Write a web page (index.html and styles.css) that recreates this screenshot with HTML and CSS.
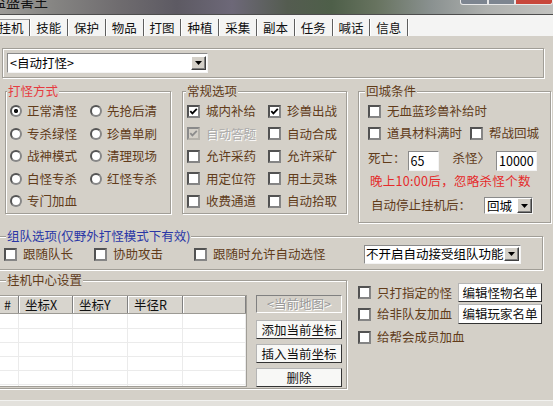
FILE: index.html
```html
<!DOCTYPE html>
<html lang="zh-CN">
<head>
<meta charset="utf-8">
<title>挂机设置</title>
<link rel="stylesheet" href="styles.css">
</head>
<body>
<div class="titlebar">
  <span class="title-text">监盛害王</span>
  <div class="winbtns"><span class="wb wb-min"></span><span class="wb wb-max"></span><span class="wb wb-close"></span></div>
</div>
<div class="tabs">
  <span class="tab tab-first active">挂机</span>
  <span class="tab">技能</span>
  <span class="tab">保护</span>
  <span class="tab">物品</span>
  <span class="tab">打图</span>
  <span class="tab">种植</span>
  <span class="tab">采集</span>
  <span class="tab">副本</span>
  <span class="tab">任务</span>
  <span class="tab">喊话</span>
  <span class="tab">信息</span>
</div>
<div class="panel">
  <div class="topframe">
    <div class="select sel-mode"><span class="sel-text">&lt;自动打怪&gt;</span><span class="drop"><svg width="7" height="4" viewBox="0 0 7 4"><polygon points="0,0 7,0 3.5,4" fill="#000"/></svg></span></div>
  </div>

  <div class="groups">
    <div class="group g1">
      <div class="legend red">打怪方式</div>
      <div class="opts opts-g1">
        <label class="opt"><span class="radio on"></span>正常清怪</label>
        <label class="opt"><span class="radio"></span>先抢后清</label>
        <label class="opt"><span class="radio"></span>专杀绿怪</label>
        <label class="opt"><span class="radio"></span>珍兽单刷</label>
        <label class="opt"><span class="radio"></span>战神模式</label>
        <label class="opt"><span class="radio"></span>清理现场</label>
        <label class="opt"><span class="radio"></span>白怪专杀</label>
        <label class="opt"><span class="radio"></span>红怪专杀</label>
        <label class="opt"><span class="radio"></span>专门加血</label>
      </div>
    </div>

    <div class="group g2">
      <div class="legend">常规选项</div>
      <div class="opts opts-g2">
        <label class="opt"><span class="cb on"><svg width="9" height="9" viewBox="0 0 9 9"><path d="M1.3 4.2 L3.4 6.4 L7.8 1.9" fill="none" stroke="#000" stroke-width="1.8"/></svg></span>城内补给</label>
        <label class="opt"><span class="cb on"><svg width="9" height="9" viewBox="0 0 9 9"><path d="M1.3 4.2 L3.4 6.4 L7.8 1.9" fill="none" stroke="#000" stroke-width="1.8"/></svg></span>珍兽出战</label>
        <label class="opt disabled"><span class="cb on dis"><svg width="9" height="9" viewBox="0 0 9 9"><path d="M1.3 4.2 L3.4 6.4 L7.8 1.9" fill="none" stroke="#8c8c8c" stroke-width="1.8"/></svg></span>自动答题</label>
        <label class="opt"><span class="cb"></span>自动合成</label>
        <label class="opt"><span class="cb"></span>允许采药</label>
        <label class="opt"><span class="cb"></span>允许采矿</label>
        <label class="opt"><span class="cb"></span>用定位符</label>
        <label class="opt"><span class="cb"></span>用土灵珠</label>
        <label class="opt"><span class="cb"></span>收费通道</label>
        <label class="opt"><span class="cb"></span>自动拾取</label>
      </div>
    </div>

    <div class="group g3">
      <div class="legend">回城条件</div>
      <div class="g3-body">
        <div class="g3-row r1"><label class="opt"><span class="cb"></span>无血蓝珍兽补给时</label></div>
        <div class="g3-row r2">
          <label class="opt w102"><span class="cb"></span>道具材料满时</label>
          <label class="opt"><span class="cb"></span>帮战回城</label>
        </div>
        <div class="g3-row r3">
          <span class="lbl">死亡：</span>
          <span class="input in-death">65</span>
          <span class="lbl lbl-kill">杀怪〉</span>
          <span class="input in-kill">10000</span>
        </div>
        <div class="g3-row r4"><span class="warn">晚上10:00后，忽略杀怪个数</span></div>
        <div class="g3-row r5">
          <span class="lbl">自动停止挂机后：</span>
          <div class="select sel-back"><span class="sel-text">回城</span><span class="drop"><svg width="7" height="4" viewBox="0 0 7 4"><polygon points="0,0 7,0 3.5,4" fill="#000"/></svg></span></div>
        </div>
      </div>
    </div>
  </div>

  <div class="group team">
    <div class="legend blue">组队选项(仅野外打怪模式下有效)</div>
    <div class="team-row">
      <label class="opt t1"><span class="cb"></span>跟随队长</label>
      <label class="opt t2"><span class="cb"></span>协助攻击</label>
      <label class="opt t3"><span class="cb"></span>跟随时允许自动选怪</label>
      <div class="select sel-team"><span class="sel-text">不开启自动接受组队功能</span><span class="drop"><svg width="7" height="4" viewBox="0 0 7 4"><polygon points="0,0 7,0 3.5,4" fill="#000"/></svg></span></div>
    </div>
  </div>

  <div class="bottom">
    <div class="group center">
      <div class="legend">挂机中心设置</div>
      <div class="center-body">
        <div class="table">
          <div class="trow thead">
            <span class="th">#</span><span class="th">坐标X</span><span class="th">坐标Y</span><span class="th">半径R</span><span class="th"></span>
          </div>
          <div class="trow tr first"><span></span><span></span><span></span><span></span><span></span></div>
          <div class="trow tr"><span></span><span></span><span></span><span></span><span></span></div>
          <div class="trow tr"><span></span><span></span><span></span><span></span><span></span></div>
          <div class="trow tr"><span></span><span></span><span></span><span></span><span></span></div>
          <div class="trow tr"><span></span><span></span><span></span><span></span><span></span></div>
          <div class="trow tr"><span></span><span></span><span></span><span></span><span></span></div>
        </div>
        <div class="btncol">
          <span class="btn btn-map">&lt;当前地图&gt;</span>
          <span class="btn btn-add">添加当前坐标</span>
          <span class="btn btn-ins">插入当前坐标</span>
          <span class="btn btn-del">删除</span>
        </div>
      </div>
    </div>

    <div class="rightopts">
      <div class="rrow rr1"><label class="opt w100"><span class="cb"></span>只打指定的怪</label><span class="btn btn-edit">编辑怪物名单</span></div>
      <div class="rrow rr2"><label class="opt w100"><span class="cb"></span>给非队友加血</label><span class="btn btn-edit">编辑玩家名单</span></div>
      <div class="rrow rr3"><label class="opt"><span class="cb"></span>给帮会成员加血</label></div>
    </div>
  </div>

  <div class="statusbar"></div>
</div>
</body>
</html>
```
FILE: styles.css
```css
* { box-sizing: border-box; }
html, body { margin: 0; padding: 0; }
body {
  width: 553px;
  height: 406px;
  overflow: hidden;
  background: #d4d0c8;
  font-family: "Noto Sans CJK SC", "Noto Sans", sans-serif;
  font-size: 12.5px;
  line-height: 14px;
  color: #613c1a;
}

/* title bar */
.titlebar {
  height: 15px;
  display: flex;
  align-items: flex-start;
  overflow: hidden;
  border-bottom: 1px solid #4d4d4d;
  background: linear-gradient(90deg, #9c9b98 0%, #858482 10%, #6e6b6e 22%, #5d5a63 32%, #6d6878 42%, #545c50 52%, #4e5f49 60%, #67735f 68%, #8a9190 78%, #aeb0ae 88%, #c2c2bf 100%);
}
.title-text {
  font-size: 14px;
  line-height: 14px;
  margin-top: -6px;
  margin-left: -8px;
  color: #111;
}
.winbtns { margin-left: auto; display: flex; }
.wb {
  height: 5px;
  border: 1px solid #e8e8e8;
  border-top: none;
}
.wb-min { width: 28px; background: #7d8590; border-radius: 0 0 0 3px; }
.wb-max { width: 27px; background: #7d8590; }
.wb-close { width: 38px; background: #c8473b; border-radius: 0 0 3px 0; }

/* tabs */
.tabs {
  height: 21px;
  padding-top: 4px;
  display: flex;
  background: #f4f4f3;
}
.tab {
  flex: 0 0 37.8px;
  height: 17px;
  display: flex;
  align-items: center;
  justify-content: center;
  color: #111;
  border-right: 1px solid #5e5e5e;
  box-shadow: 1px 0 0 #ffffff;
}
.tab-first { margin-left: -7.5px; }
.tab.active { border-top: 1px solid #9a9a9a; }

/* panel */
.topframe {
  margin: 12px 0 0 2px;
  width: 542px;
  height: 30px;
  border: 1px solid #a19e97;
  box-shadow: inset 1px 1px 0 #fff, 1px 1px 0 #fff;
  padding: 4px 0 0 4px;
}

.select {
  display: flex;
  align-items: center;
  background: #fff;
  border: 1px solid;
  border-color: #8a8a8a #f4f4f4 #f4f4f4 #8a8a8a;
  color: #000;
}
.sel-text { white-space: nowrap; padding-left: 2px; flex: 1 1 auto; }
.drop {
  flex: 0 0 auto;
  width: 15px;
  height: 14px;
  margin-right: 1px;
  display: flex;
  align-items: center;
  justify-content: center;
  background: #d4d0c8;
  border: 1px solid;
  border-color: #ffffff #404040 #404040 #ffffff;
  box-shadow: inset -1px -1px 0 #808080;
}
.sel-mode { width: 201px; height: 20px; }

.groups {
  display: flex;
  align-items: flex-start;
  margin-top: 13px;
}
.group {
  border: 1px solid #a19e97;
  box-shadow: inset 1px 1px 0 #fff, 1px 1px 0 #fff;
}
.legend {
  width: max-content;
  margin-top: -8px;
  line-height: 14px;
  height: 14px;
  background: #d4d0c8;
  padding: 0 1px;
  white-space: nowrap;
}
.red { color: #e63b3f; }
.blue { color: #2a37a6; }

.g1 { margin-left: 5px; width: 166px; height: 123px; }
.g1 .legend { margin-left: 1px; }
.g2 { margin-left: 11px; width: 165px; height: 123px; }
.g2 .legend { margin-left: 3px; }
.g3 { margin-left: 11px; width: 193px; height: 132px; }
.g3 .legend { margin-left: 6px; }

.opts {
  display: grid;
  grid-auto-rows: 22.5px;
  align-items: center;
  margin-top: 2px;
}
.opts-g1 { grid-template-columns: 80px 1fr; padding-left: 4px; }
.opts-g2 { grid-template-columns: 81px 1fr; padding-left: 4px; }

.opt {
  display: flex;
  align-items: center;
  white-space: nowrap;
}
.radio {
  flex: 0 0 auto;
  width: 12px;
  height: 12px;
  margin-right: 5px;
  border-radius: 50%;
  border: 2px solid #555;
  border-right-color: #888;
  border-bottom-color: #888;
  background: #fff;
}
.radio.on { background: radial-gradient(circle, #111 0 1.8px, #fff 2.4px); }
.cb {
  flex: 0 0 auto;
  width: 13px;
  height: 13px;
  margin-right: 6px;
  border: 2px solid #525252;
  border-right-color: #858585;
  border-bottom-color: #858585;
  background: #fff;
  display: flex;
  align-items: center;
  justify-content: center;
}
.cb.dis { background: #d4d0c8; border-color: #8a8a8a #b5b2ab #b5b2ab #8a8a8a; }
.disabled { color: #ababab; text-shadow: 1px 1px 0 #fff; }

.g3-body { padding-left: 9px; margin-top: 2px; }
.g3-row { display: flex; align-items: center; }
.r1, .r2 { height: 22px; }
.w102 { width: 102px; }
.r3 { height: 27px; align-items: flex-start; }
.r3 .lbl { margin-top: 7px; }
.input {
  margin-top: 7px;
  height: 20px;
  background: #fff;
  border: 1px solid;
  border-color: #8a8a8a #f4f4f4 #f4f4f4 #8a8a8a;
  color: #000;
  padding: 2px 0 0 2px;
}
.in-death { width: 31px; margin-left: 2px; }
.lbl-kill { margin-left: 14px; }
.in-kill { width: 41px; margin-left: 6px; }
.r4 { height: 20px; padding-left: 2px; }
.warn { color: #e52a2a; letter-spacing: 0.3px; }
.r5 { height: 24px; padding-left: 3px; align-items: flex-start; }
.r5 .lbl { margin-top: 7px; }
.sel-back { width: 49px; height: 17px; margin-top: 6px; margin-left: 13px; }
.sel-back .drop { height: 15px; margin-right: 0; }

.team {
  margin-top: 13px;
  margin-left: -5px;
  width: 548px;
  height: 34px;
}
.team .legend { margin-left: 10px; }
.team-row {
  display: flex;
  align-items: center;
  height: 22px;
  padding-left: 8px;
}
.t1 { width: 90px; }
.t2 { width: 100px; }
.t3 { width: 170px; }
.sel-team { width: 157px; height: 19px; }
.sel-team .sel-text { padding-left: 1px; }

.bottom {
  display: flex;
  align-items: flex-start;
  margin-top: 10px;
}
.center {
  margin-left: -5px;
  width: 352px;
  height: 109px;
}
.center .legend { margin-left: 10px; }
.center-body {
  display: flex;
  align-items: flex-start;
  margin-top: 8px;
  padding-left: 1px;
}
.table {
  width: 250px;
  height: 92px;
  overflow: hidden;
  background: #fff;
  border: 1px solid #a19e97;
}
.trow {
  display: grid;
  grid-template-columns: 21px 54px 55px 55px 1fr;
}
.thead { height: 18px; border-bottom: 1px solid #9c9a94; background: #d8d5ce; }
.th {
  color: #111;
  padding-left: 6px;
  line-height: 17px;
  border-right: 1px solid #808080;
  box-shadow: inset 1px 1px 0 #fff;
}
.tr { height: 14px; border-bottom: 1px solid #ebebeb; }
.tr.first { height: 15px; }
.tr span { border-right: 1px solid #ebebeb; }

.btncol {
  margin-left: 9px;
  width: 86px;
  display: flex;
  flex-direction: column;
}
.btn {
  display: flex;
  align-items: center;
  justify-content: center;
  background: #f8f8f6;
  color: #111;
  border: 1px solid;
  border-color: #b5b5b5 #333 #333 #b5b5b5;
  white-space: nowrap;
}
.btn-map {
  height: 18px;
  background: #d4d0c8;
  color: #9a9a9a;
  text-shadow: 1px 1px 0 #fff;
  border-color: #808080 #fff #fff #808080;
}
.btn-add { height: 19px; margin-top: 7px; }
.btn-ins { height: 19px; margin-top: 5px; }
.btn-del { height: 19px; margin-top: 5px; }

.rightopts {
  margin-left: 11px;
  margin-top: 3px;
  display: flex;
  flex-direction: column;
}
.rrow { display: flex; align-items: center; }
.rr1 { height: 19px; }
.rr2 { height: 20px; margin-top: 2px; }
.rr3 { height: 20px; margin-top: 3px; }
.w100 { width: 100px; }
.btn-edit { width: 84px; height: 100%; background: #fff; }

.statusbar {
  margin-top: 11px;
  height: 8px;
  background: #e3e1dc;
  border-top: 1px solid #f2f2f0;
}
```
